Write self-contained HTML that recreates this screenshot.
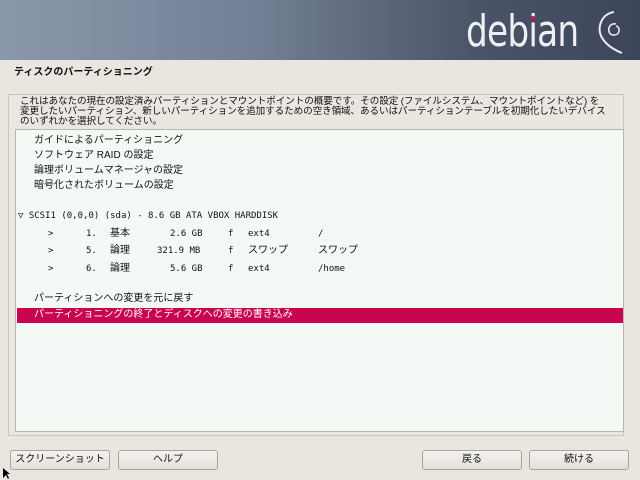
<!DOCTYPE html>
<html><head><meta charset="utf-8"><style>
*{margin:0;padding:0;box-sizing:border-box}
body{width:640px;height:480px;background:#e8e6df;font-family:"Liberation Sans","Noto Sans CJK JP",sans-serif;font-size:10px;color:#111;position:relative;overflow:hidden}
.hdr{position:absolute;left:0;top:0;width:640px;height:60px;background:linear-gradient(90deg,#8b98ac 0%,#737f94 40%,#4a5468 75%,#3c4559 100%)}
.logo{position:absolute;left:466px;top:6px;font-size:44px;color:#eef0f2;letter-spacing:-1px;font-family:"DejaVu Sans","Liberation Sans",sans-serif;transform:scaleX(.78);transform-origin:left}
.t{position:absolute;white-space:nowrap;line-height:14px}
.panel{position:absolute;left:8px;top:94px;width:616px;height:342px;border:1px solid #c9c6bb;background:#e9e7e0}
.list{position:absolute;left:15px;top:129px;width:609px;height:303px;border:1px solid #b9b6ab;background:#f5f9f6}
.sel{position:absolute;left:17px;top:308px;width:606px;height:15px;background:#c8044f}
.mono{font-family:"DejaVu Sans Mono","Liberation Mono","Noto Sans CJK JP",monospace;font-size:9px}
.btn{position:absolute;top:450px;height:20px;border:1px solid #a8a59c;border-radius:3px;background:linear-gradient(#f4f3ef,#e2e0d8);text-align:center;line-height:18px;font-size:10px}
</style></head><body>
<div class="hdr"></div>
<div class="logo">debian</div>
<svg style="position:absolute;left:592px;top:6px" width="40" height="50" viewBox="0 0 40 50"><path d="M22 6 C10 8 5 20 9 30 C13 38 20 43 30 47" stroke="#e8eaee" stroke-width="2" fill="none"/><path d="M24 18 C16 16 14 28 21 29 C28 30 29 21 24 20" stroke="#e8eaee" stroke-width="1.6" fill="none"/></svg>
<div style="position:absolute;left:531px;top:16px;width:4px;height:4px;background:#d0104c;border-radius:2px"></div>
<div class="t" style="left:14px;top:66px;font-weight:bold;font-size:10px">ティスクのパーティショニング</div>
<div class="panel"></div>
<div class="t" style="left:20px;top:97px;line-height:10px;font-size:9.6px;letter-spacing:-0.1px">これはあなたの現在の設定済みパーティションとマウントポイントの概要です。その設定 (ファイルシステム、マウントポイントなど) を<br>変更したいパーティション、新しいパーティションを追加するための空き領域、あるいはパーティションテーブルを初期化したいデバイス<br>のいずれかを選択してください。</div>
<div class="list"></div>
<div class="t" style="left:34px;top:134px">ガイドによるパーティショニング</div>
<div class="t" style="left:34px;top:149px">ソフトウェア RAID の設定</div>
<div class="t" style="left:34px;top:164px">論理ボリュームマネージャの設定</div>
<div class="t" style="left:34px;top:179px">暗号化されたボリュームの設定</div>
<div class="t mono" style="left:18px;top:209px">▽ SCSI1 (0,0,0) (sda) - 8.6 GB ATA VBOX HARDDISK</div>
<div class="t mono" style="left:48px;top:227px">&gt;</div><div class="t mono" style="left:86px;top:227px">1.</div><div class="t" style="left:110px;top:227px">基本</div><div class="t mono" style="left:170px;top:227px">2.6 GB</div><div class="t mono" style="left:228px;top:227px">f</div><div class="t mono" style="left:248px;top:227px">ext4</div><div class="t mono" style="left:318px;top:227px">/</div>
<div class="t mono" style="left:48px;top:244px">&gt;</div><div class="t mono" style="left:86px;top:244px">5.</div><div class="t" style="left:110px;top:244px">論理</div><div class="t mono" style="left:157px;top:244px">321.9 MB</div><div class="t mono" style="left:228px;top:244px">f</div><div class="t" style="left:248px;top:244px">スワップ</div><div class="t" style="left:318px;top:244px">スワップ</div>
<div class="t mono" style="left:48px;top:262px">&gt;</div><div class="t mono" style="left:86px;top:262px">6.</div><div class="t" style="left:110px;top:262px">論理</div><div class="t mono" style="left:170px;top:262px">5.6 GB</div><div class="t mono" style="left:228px;top:262px">f</div><div class="t mono" style="left:248px;top:262px">ext4</div><div class="t mono" style="left:318px;top:262px">/home</div>
<div class="t" style="left:34px;top:292px">パーティションへの変更を元に戻す</div>
<div class="sel"></div>
<div class="t" style="left:34px;top:308px;color:#fff">パーティショニングの終了とディスクへの変更の書き込み</div>
<div class="btn" style="left:10px;width:100px">スクリーンショット</div>
<div class="btn" style="left:118px;width:100px">ヘルプ</div>
<div class="btn" style="left:422px;width:100px">戻る</div>
<div class="btn" style="left:529px;width:100px">続ける</div>
<svg style="position:absolute;left:3px;top:468px" width="8" height="12"><path d="M0 0 L0 10 L3 7 L5 11 L6 10 L4 6 L7 6 Z" fill="#000"/></svg>
</body></html>
